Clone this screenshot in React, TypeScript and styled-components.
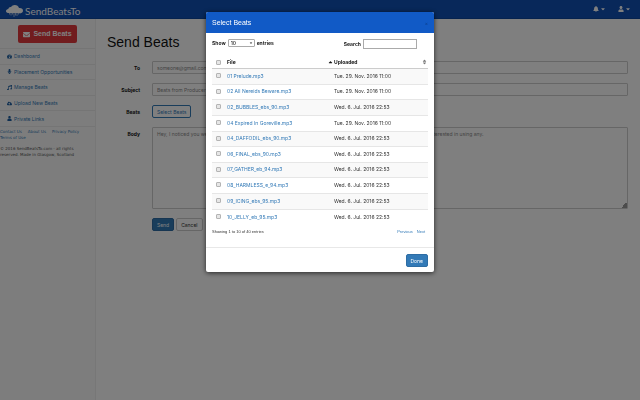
import React from 'react';
import styled, { createGlobalStyle } from 'styled-components';
import {
  FaBell,
  FaCaretDown,
  FaCaretUp,
  FaCloudUploadAlt,
  FaEnvelope,
  FaMicrophone,
  FaMusic,
  FaSort,
  FaTachometerAlt,
  FaUser,
} from 'react-icons/fa';

const Global = createGlobalStyle`
  *, *::before, *::after { box-sizing: border-box; }
  body {
    margin: 0;
    background: #fff;
    color: #333;
    font: 5px/8px Inter, "Liberation Sans", sans-serif;
  }
  button, input, select, textarea { font: inherit; color: inherit; margin: 0; }
  a { color: #337ab7; text-decoration: none; }
`;

const Page = styled.div`
  display: flex;
  flex-direction: column;
  min-height: 100vh;
`;

const TopBar = styled.header`
  display: flex;
  align-items: center;
  justify-content: space-between;
  height: 19px;
  padding: 0 10px 0 6px;
  background: #1050b4;
  border-bottom: 1px solid #0c469f;
  color: #fff;
`;

const Brand = styled.a`
  display: flex;
  align-items: center;
  gap: 2px;
  padding-top: 4px;
  color: #fff;
  font: 10px/12px Lato, sans-serif;
`;

const BarActions = styled.div`
  display: flex;
  gap: 13px;
`;

const BarButton = styled.button`
  display: flex;
  align-items: center;
  gap: 2px;
  padding: 0;
  border: 0;
  background: none;
  svg { width: 6px; height: 6px; }
  svg + svg { width: 4px; }
`;

const Body = styled.div`
  display: flex;
  flex: 1;
`;

const Sidebar = styled.aside`
  width: 96px;
  background: #fbfbfb;
  border-right: 1px solid #efefef;
`;

const ComposeArea = styled.div`
  padding: 6px 18px 5px;
`;

const ComposeButton = styled.button`
  display: flex;
  align-items: center;
  justify-content: center;
  gap: 3px;
  width: 100%;
  height: 18px;
  padding: 0;
  border: 0;
  border-radius: 2px;
  background: #e2393d;
  color: #fff;
  font: bold 7px/8px "Liberation Sans", sans-serif;
  svg { width: 7px; height: 7px; }
`;

const Nav = styled.nav`
  display: grid;
  grid-auto-rows: 1fr;
  height: 79px;
  border-bottom: 1px solid #ebebeb;
`;

const NavLink = styled.a`
  display: flex;
  align-items: center;
  gap: 2px;
  padding-left: 7px;
  border-top: 1px solid #ebebeb;
  svg { width: 5px; height: 5px; color: #1c5fa3; }
`;

const Legal = styled.footer`
  font: 4px/6px "DejaVu Sans", sans-serif;
  padding-top: 2px;
  a { margin-right: 6px; }
  p { margin: 5px 0 0; color: #555; }
`;

const Main = styled.main`
  flex: 1;
  padding: 15px 12px 0 11px;
`;

const Heading = styled.h1`
  margin: 0 0 11px;
  color: #111;
  font: 14px/16px "Liberation Sans", sans-serif;
`;

const Form = styled.form`
  display: grid;
  grid-template-columns: 33px 1fr;
  column-gap: 12px;
  row-gap: 9px;
`;

const FieldLabel = styled.label`
  padding-top: 3px;
  text-align: right;
  font-weight: 700;
  color: #111;
`;

const TextField = styled.input`
  width: 100%;
  height: 13px;
  padding: 0 4px;
  border: 1px solid #ccc;
  border-radius: 1px;
  background: #fff;
  &::placeholder { color: #888; opacity: 1; }
`;

const Message = styled.textarea`
  display: block;
  width: 100%;
  height: 82px;
  padding: 2px 4px;
  border: 1px solid #ccc;
  border-radius: 1px;
  background: #fff;
  &::placeholder { color: #888; opacity: 1; }
  &::-webkit-resizer {
    background: linear-gradient(135deg, transparent 80%, #999 80%);
  }
`;

const Button = styled.button<{ $kind: 'primary' | 'outline' | 'plain' }>`
  height: 13px;
  padding: 0 4px;
  border: 1px solid
    ${({ $kind }) => ($kind === 'plain' ? '#ccc' : $kind === 'outline' ? '#337ab7' : '#2e6da4')};
  border-radius: 2px;
  background: ${({ $kind }) => ($kind === 'primary' ? '#337ab7' : '#fff')};
  color: ${({ $kind }) => ($kind === 'primary' ? '#fff' : $kind === 'outline' ? '#337ab7' : '#333')};
`;

const FormActions = styled.div`
  grid-column: 2;
  display: flex;
  gap: 2px;
`;

const Backdrop = styled.div`
  position: fixed;
  inset: 0;
  display: flex;
  justify-content: center;
  align-items: flex-start;
  padding-top: 12px;
  background: rgba(0, 0, 0, 0.5);
`;

const Dialog = styled.section`
  width: 100%;
  max-width: 228px;
  border-radius: 2px;
  background: #fff;
  box-shadow: 0 1px 5px rgba(0, 0, 0, 0.7);
  overflow: hidden;
`;

const DialogHeader = styled.header`
  display: flex;
  justify-content: space-between;
  align-items: center;
  height: 21px;
  padding: 0 6px;
  background: #115ac6;
  color: #fff;
`;

const DialogTitle = styled.h2`
  margin: 0;
  font: 7px/8px "Liberation Sans", sans-serif;
`;

const CloseButton = styled.button`
  height: 8px;
  padding: 0;
  border: 0;
  background: none;
  color: #0c3f8c;
  line-height: 6px;
`;

const DialogBody = styled.div`
  padding: 6px 6px 10px;
`;

const Filters = styled.div`
  display: flex;
  justify-content: space-between;
  align-items: flex-start;
  height: 15px;
  padding-right: 11px;
  font-weight: 700;
  color: #222;
  label { display: flex; align-items: center; gap: 2px; }
`;

const SelectWrap = styled.span`
  display: grid;
  align-items: center;
  font-weight: 500;
  > * { grid-area: 1 / 1; }
  svg { width: 4px; height: 4px; justify-self: end; margin-right: 2px; pointer-events: none; }
`;

const CountSelect = styled.select`
  appearance: none;
  width: 27px;
  height: 8px;
  padding: 0 2px;
  border: 1px solid #aaa;
  border-radius: 1px;
  background: #fff;
  line-height: 6px;
`;

const SearchBox = styled.input`
  width: 54px;
  height: 10px;
  padding: 0 2px;
  border: 1px solid #aaa;
  background: #fff;
`;

const Files = styled.table`
  width: 100%;
  border-collapse: separate;
  border-spacing: 0;
  table-layout: fixed;
  th, td { padding: 0; text-align: left; vertical-align: middle; }
  th { height: 15px; padding-top: 2px; border-bottom: 1px solid #ccc; color: #111; }
  td { height: 16px; padding-bottom: 2px; border-bottom: 1px solid #e6e6e6; }
  tbody tr:nth-child(5n + 2) td, tbody tr:nth-child(5n) td { height: 15px; }
  tbody tr:nth-child(odd) { background: #f9f9f9; }
  tbody tr:last-child td { border-bottom: 0; }
`;

const CheckCol = styled.col`
  width: 15px;
`;

const FileCol = styled.col`
  width: 107px;
`;

const SortHeader = styled.div`
  display: flex;
  align-items: center;
  justify-content: space-between;
  padding-right: 1px;
  svg { width: 5px; height: 6px; }
`;

const Check = styled.input`
  appearance: none;
  display: block;
  width: 5px;
  height: 5px;
  margin-left: 4px;
  border: 1px solid #b4b4b4;
  border-radius: 1px;
  background: #e6e6e6;
`;

const TableFooter = styled.div`
  display: flex;
  justify-content: space-between;
  padding: 3px 3px 1px 0;
  font: 4px/8px "Liberation Sans", sans-serif;
`;

const Pager = styled.nav`
  display: flex;
  gap: 4px;
`;

const DialogFooter = styled.footer`
  display: flex;
  justify-content: flex-end;
  padding: 6px 6px 5px;
  border-top: 1px solid #e8e8e8;
`;

const CloudLogo = () => (
  <svg width="17" height="12" viewBox="0 0 17 12" aria-hidden="true">
    <path
      d="M3 8C1.2 8 0 7.3 0 6.2 0 5 1 4.2 2.3 4.1 2.5 2.6 3.7 1.8 5 2 5.8.7 7.2 0 8.8 0c2.1 0 3.7 1.2 4.2 3.1C15.4 2.8 17 4 17 5.7 17 7.2 15.8 8 14.3 8Z"
      fill="#fff"
    />
    <path
      d="M3.500 8v1.500M5 8v2.500M6.500 8v1.500M8 8v4M9.500 8v2.500M11 8v3M12.500 8v1.500M14 8v1"
      stroke="#fff"
      strokeWidth=".8"
      opacity=".75"
    />
  </svg>
);

const links = [
  { text: 'Dashboard', icon: <FaTachometerAlt /> },
  { text: 'Placement Opportunities', icon: <FaMicrophone /> },
  { text: 'Manage Beats', icon: <FaMusic /> },
  { text: 'Upload New Beats', icon: <FaCloudUploadAlt /> },
  { text: 'Private Links', icon: <FaUser /> },
];

const november = 'Tue. 29. Nov. 2016 11:00';
const july = 'Wed. 6. Jul. 2016 22:53';

const files = [
  { name: '01 Prelude.mp3', date: november },
  { name: '02 All Nereids Beware.mp3', date: november },
  { name: '02_BUBBLES_ebs_90.mp3', date: july },
  { name: '04 Expired In Goreville.mp3', date: november },
  { name: '04_DAFFODIL_ebs_90.mp3', date: july },
  { name: '06_FINAL_ebs_90.mp3', date: july },
  { name: '07_GATHER_eb_94.mp3', date: july },
  { name: '08_HARMLESS_e_94.mp3', date: july },
  { name: '09_ICING_ebs_95.mp3', date: july },
  { name: '10_JELLY_eb_95.mp3', date: july },
];

export default function App() {
  return (
    <>
      <Global />
      <Page>
        <TopBar>
          <Brand href="#">
            <CloudLogo />
            SendBeatsTo
          </Brand>
          <BarActions>
            <BarButton aria-label="Notifications"><FaBell /><FaCaretDown /></BarButton>
            <BarButton aria-label="Account"><FaUser /><FaCaretDown /></BarButton>
          </BarActions>
        </TopBar>
        <Body>
          <Sidebar>
            <ComposeArea>
              <ComposeButton><FaEnvelope />Send Beats</ComposeButton>
            </ComposeArea>
            <Nav>
              {links.map(({ text, icon }) => (
                <NavLink href="#" key={text}>{icon}{text}</NavLink>
              ))}
            </Nav>
            <Legal>
              <a href="#">Contact Us</a>
              <a href="#">About Us</a>
              <a href="#">Privacy Policy</a>
              <br />
              <a href="#">Terms of Use</a>
              <p>© 2016 SendBeatsTo.com - all rights<br />reserved. Made in Glasgow, Scotland</p>
            </Legal>
          </Sidebar>
          <Main>
            <Heading>Send Beats</Heading>
            <Form>
              <FieldLabel htmlFor="to">To</FieldLabel>
              <TextField id="to" placeholder="someone@gmail.com" />
              <FieldLabel htmlFor="subject">Subject</FieldLabel>
              <TextField id="subject" placeholder="Beats from Producer" />
              <FieldLabel htmlFor="beats">Beats</FieldLabel>
              <div>
                <Button id="beats" type="button" $kind="outline">Select Beats</Button>
              </div>
              <FieldLabel htmlFor="body">Body</FieldLabel>
              <Message
                id="body"
                placeholder="Hey, I noticed you were looking for beats for your upcoming project. Here are a few of mine, let me know if you are interested in using any."
              />
              <FormActions>
                <Button type="button" $kind="primary">Send</Button>
                <Button type="button" $kind="plain">Cancel</Button>
              </FormActions>
            </Form>
          </Main>
        </Body>
      </Page>
      <Backdrop>
        <Dialog role="dialog" aria-modal="true" aria-labelledby="dialog-title">
          <DialogHeader>
            <DialogTitle id="dialog-title">Select Beats</DialogTitle>
            <CloseButton aria-label="Close">×</CloseButton>
          </DialogHeader>
          <DialogBody>
            <Filters>
              <label>
                Show
                <SelectWrap>
                  <CountSelect defaultValue="10">
                    <option>10</option>
                    <option>25</option>
                    <option>50</option>
                  </CountSelect>
                  <FaCaretDown />
                </SelectWrap>
                entries
              </label>
              <label>
                Search
                <SearchBox type="search" />
              </label>
            </Filters>
            <Files>
              <colgroup>
                <CheckCol />
                <FileCol />
                <col />
              </colgroup>
              <thead>
                <tr>
                  <th><Check type="checkbox" aria-label="Select all" /></th>
                  <th><SortHeader>File<FaCaretUp /></SortHeader></th>
                  <th><SortHeader>Uploaded<FaSort color="#777" /></SortHeader></th>
                </tr>
              </thead>
              <tbody>
                {files.map(({ name, date }) => (
                  <tr key={name}>
                    <td><Check type="checkbox" aria-label={name} /></td>
                    <td><a href="#">{name}</a></td>
                    <td>{date}</td>
                  </tr>
                ))}
              </tbody>
            </Files>
            <TableFooter>
              <span>Showing 1 to 10 of 40 entries</span>
              <Pager aria-label="Pages">
                <a href="#">Previous</a>
                <a href="#">Next</a>
              </Pager>
            </TableFooter>
          </DialogBody>
          <DialogFooter>
            <Button $kind="primary">Done</Button>
          </DialogFooter>
        </Dialog>
      </Backdrop>
    </>
  );
}
